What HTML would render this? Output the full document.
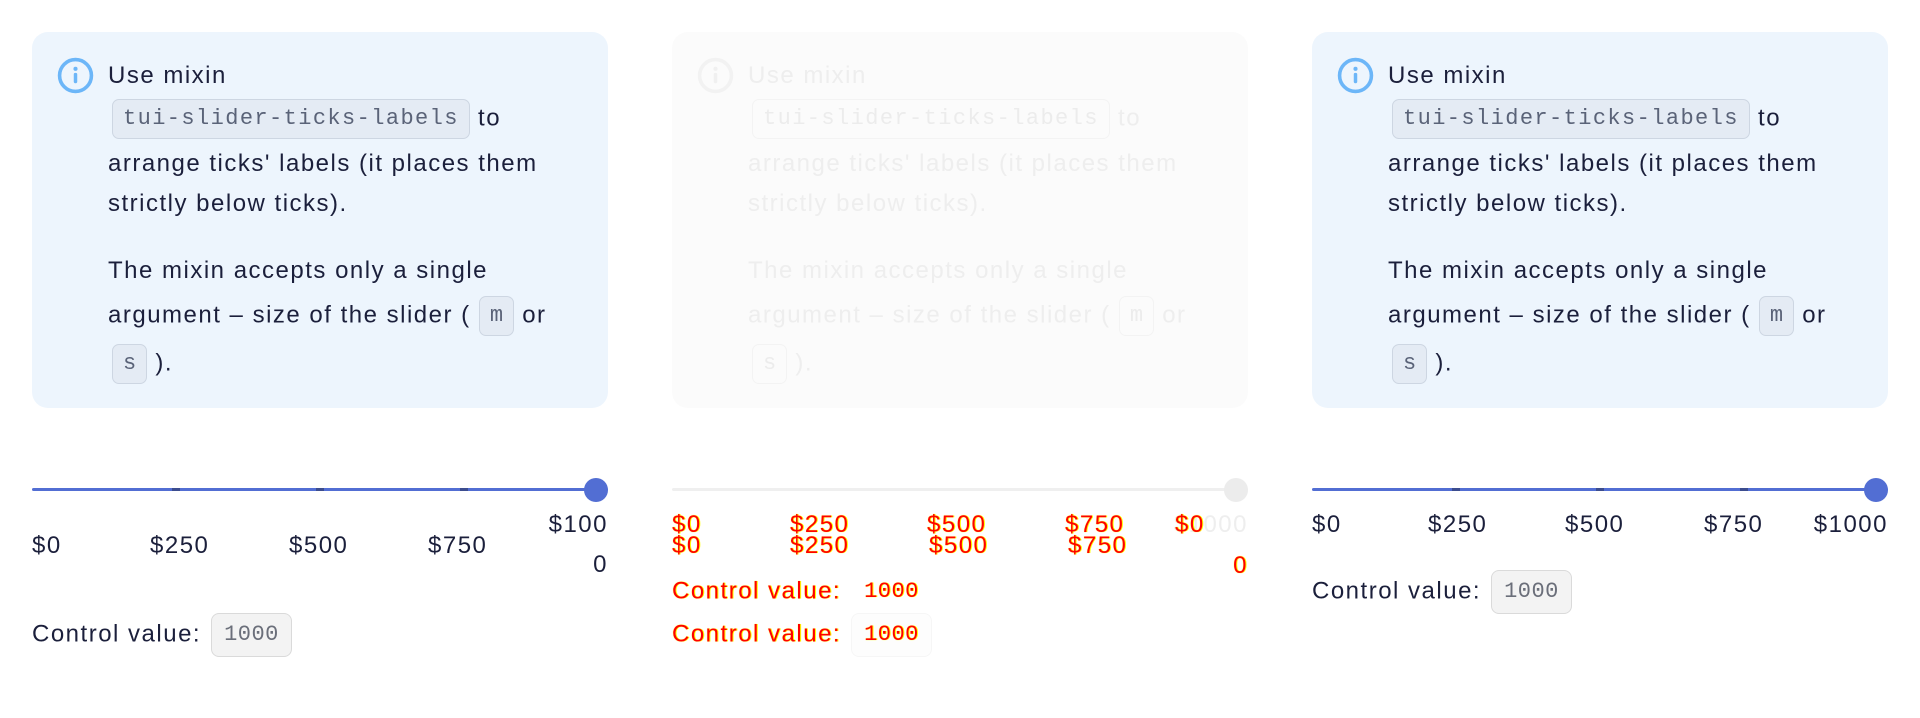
<!DOCTYPE html>
<html><head><meta charset="utf-8"><style>
*{box-sizing:border-box;margin:0;padding:0}
body{width:1920px;height:718px;background:#fff;font-family:"Liberation Sans",sans-serif;color:#1b1f3b;position:relative;overflow:hidden}
.col{position:absolute;top:32px;width:576px;height:660px}
.box{position:absolute;left:0;top:0;width:576px;height:376px;background:#edf5fd;border-radius:16px}
.icon{position:absolute;left:25px;top:25px;width:37px;height:37px}
.t{position:absolute;left:76px;font-size:24px;letter-spacing:1.5px;white-space:nowrap;line-height:30px}
.code{display:inline-block;font-family:"Liberation Mono",monospace;font-size:22px;color:#5a6378;background:#e4ebf4;border:1px solid #cdd6e2;border-radius:7px;padding:0 10px;height:40px;line-height:38px;letter-spacing:1.4px;vertical-align:middle}
.sq{letter-spacing:0;padding:0 10px}
.track{position:absolute;left:0;top:456px;width:576px;height:3px;background:#526ed3;border-radius:2px}
.tick{position:absolute;top:0;width:8px;height:3px;background:#3c4d8f}
.thumb{position:absolute;right:0;top:-10px;width:24px;height:24px;border-radius:50%;background:#526ed3}
.lbl{position:absolute;font-size:24px;letter-spacing:1.5px;line-height:40px;white-space:nowrap}
.cv{position:absolute;left:0;font-size:24px;letter-spacing:1.5px;white-space:nowrap}
.chip{display:inline-block;font-family:"Liberation Mono",monospace;font-size:22px;letter-spacing:0.5px;color:#6b6f7a;background:#f3f3f3;border:1px solid #dadada;border-radius:8px;height:44px;line-height:42px;padding:0 12px;margin-left:10px;vertical-align:middle}
.faint .box{background:#fbfbfb}
.faint .t{color:#eeeeee}
.faint .code{background:#fbfbfb;border-color:#f3f3f3;color:#ececec}
.red{color:#f00;text-shadow:0 0 1px #ff0,1px 0 0 #ff0}
</style></head><body>

<!-- LEFT -->
<div class="col" style="left:32px">
 <div class="box">
  <svg class="icon" viewBox="0 0 36 36"><circle cx="18" cy="18" r="15.5" fill="none" stroke="#6cb6f8" stroke-width="3.5"/><circle cx="18" cy="11.5" r="2" fill="#6cb6f8"/><rect x="16.3" y="15.5" width="3.4" height="10" rx="1.5" fill="#6cb6f8"/></svg>
  <div class="t" style="top:29px">Use mixin</div>
  <div class="t" style="top:67px;left:80px"><span class="code">tui-slider-ticks-labels</span> to</div>
  <div class="t" style="top:117px">arrange ticks' labels (it places them</div>
  <div class="t" style="top:157px">strictly below ticks).</div>
  <div class="t" style="top:224px">The mixin accepts only a single</div>
  <div class="t" style="top:264px">argument – size of the slider ( <span class="code sq">m</span> or</div>
  <div class="t" style="top:312px;left:80px"><span class="code sq">s</span> ).</div>
 </div>
 <div class="track"><div class="tick" style="left:140px"></div><div class="tick" style="left:284px"></div><div class="tick" style="left:428px"></div><div class="thumb"></div></div>
 <div class="lbl" style="left:0;top:494px">$0</div>
 <div class="lbl" style="left:118px;top:494px">$250</div>
 <div class="lbl" style="left:257px;top:494px">$500</div>
 <div class="lbl" style="left:396px;top:494px">$750</div>
 <div class="lbl" style="right:0;top:473px;text-align:right;line-height:40px">$100<br>0</div>
 <div class="cv" style="top:581px">Control value:<span class="chip">1000</span></div>
</div>

<!-- MIDDLE -->
<div class="col faint" style="left:672px">
 <div class="box">
  <svg class="icon" viewBox="0 0 36 36"><circle cx="18" cy="18" r="15.5" fill="none" stroke="#f2f2f2" stroke-width="3.5"/><circle cx="18" cy="11.5" r="2" fill="#f0f0f0"/><rect x="16.3" y="15.5" width="3.4" height="10" rx="1.5" fill="#f0f0f0"/></svg>
  <div class="t" style="top:29px">Use mixin</div>
  <div class="t" style="top:67px;left:80px"><span class="code">tui-slider-ticks-labels</span> to</div>
  <div class="t" style="top:117px">arrange ticks' labels (it places them</div>
  <div class="t" style="top:157px">strictly below ticks).</div>
  <div class="t" style="top:224px">The mixin accepts only a single</div>
  <div class="t" style="top:264px">argument – size of the slider ( <span class="code sq">m</span> or</div>
  <div class="t" style="top:312px;left:80px"><span class="code sq">s</span> ).</div>
 </div>
 <div class="track" style="background:#efefef"><div class="thumb" style="background:#ececec"></div></div>
 <div class="lbl red" style="left:0;top:473px">$0</div>
 <div class="lbl red" style="left:118px;top:473px">$250</div>
 <div class="lbl red" style="left:255px;top:473px">$500</div>
 <div class="lbl red" style="left:393px;top:473px">$750</div>
 <div class="lbl" style="right:0;top:473px;color:#eeeeee">$1000</div>
 <div class="lbl red" style="left:503px;top:473px">$0</div>
 <div class="lbl red" style="left:0;top:494px">$0</div>
 <div class="lbl red" style="left:118px;top:494px">$250</div>
 <div class="lbl red" style="left:257px;top:494px">$500</div>
 <div class="lbl red" style="left:396px;top:494px">$750</div>
 <div class="lbl red" style="right:0;top:514px">0</div>
 <div class="cv red" style="top:538px">Control value:<span class="chip" style="background:transparent;border-color:transparent;color:#f00">1000</span></div>
 <div class="cv red" style="top:581px">Control value:<span class="chip" style="background:#fdfdfd;border-color:#f6f6f6;color:#f00">1000</span></div>
</div>

<!-- RIGHT -->
<div class="col" style="left:1312px">
 <div class="box">
  <svg class="icon" viewBox="0 0 36 36"><circle cx="18" cy="18" r="15.5" fill="none" stroke="#6cb6f8" stroke-width="3.5"/><circle cx="18" cy="11.5" r="2" fill="#6cb6f8"/><rect x="16.3" y="15.5" width="3.4" height="10" rx="1.5" fill="#6cb6f8"/></svg>
  <div class="t" style="top:29px">Use mixin</div>
  <div class="t" style="top:67px;left:80px"><span class="code">tui-slider-ticks-labels</span> to</div>
  <div class="t" style="top:117px">arrange ticks' labels (it places them</div>
  <div class="t" style="top:157px">strictly below ticks).</div>
  <div class="t" style="top:224px">The mixin accepts only a single</div>
  <div class="t" style="top:264px">argument – size of the slider ( <span class="code sq">m</span> or</div>
  <div class="t" style="top:312px;left:80px"><span class="code sq">s</span> ).</div>
 </div>
 <div class="track"><div class="tick" style="left:140px"></div><div class="tick" style="left:284px"></div><div class="tick" style="left:428px"></div><div class="thumb"></div></div>
 <div class="lbl" style="left:0;top:473px">$0</div>
 <div class="lbl" style="left:116px;top:473px">$250</div>
 <div class="lbl" style="left:253px;top:473px">$500</div>
 <div class="lbl" style="left:392px;top:473px">$750</div>
 <div class="lbl" style="right:0;top:473px">$1000</div>
 <div class="cv" style="top:538px">Control value:<span class="chip">1000</span></div>
</div>
</body></html>
